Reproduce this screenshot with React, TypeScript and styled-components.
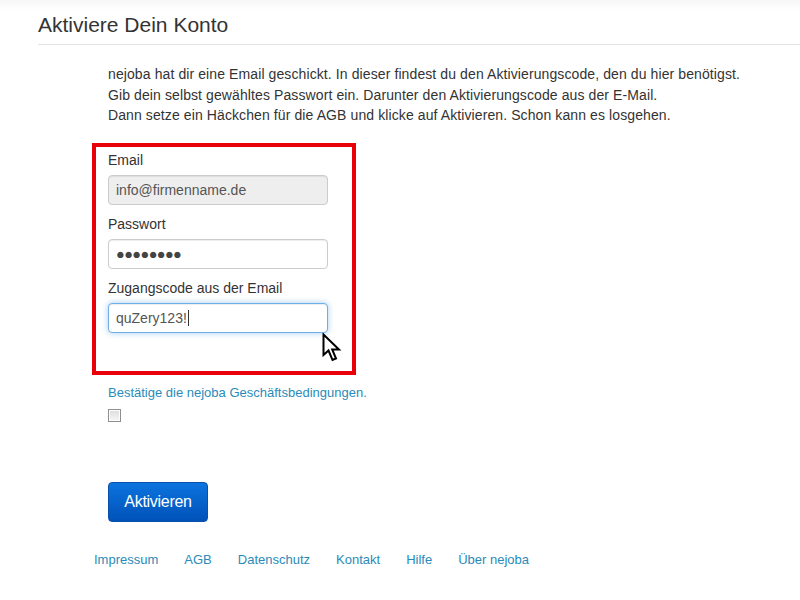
import React from "react";
import styled, { createGlobalStyle } from "styled-components";

const Global = createGlobalStyle`
  html, body { margin: 0; padding: 0; background: #fff; }
  body { font-family: "Liberation Sans", Arial, sans-serif; color: #333; }
  * { box-sizing: border-box; }
`;

const Page = styled.div`
  width: 800px;
  height: 600px;
  position: relative;
  overflow: hidden;
  background: linear-gradient(#f6f6f6 0px, #fff 10px);
`;

const Header = styled.div`
  margin-left: 38px;
  height: 45px;
  border-bottom: 1px solid #e3e3e3;
  display: flex;
  align-items: flex-end;
  padding-bottom: 7px;
`;

const Title = styled.h1`
  margin: 0;
  font-size: 21px;
  font-weight: normal;
  line-height: 24px;
  color: #333;
`;

const Content = styled.div`
  margin-left: 108px;
  padding-top: 19px;
`;

const Intro = styled.p`
  margin: 0;
  font-size: 14px;
  line-height: 20.5px;
  letter-spacing: 0.1px;
  color: #333;
`;

const Highlight = styled.div`
  position: relative;
  margin-left: -16px;
  margin-top: 17px;
  width: 264px;
  height: 232px;
  border: 4px solid #e8000b;
  padding: 3px 0 0 12px;
  display: flex;
  flex-direction: column;
`;

const Label = styled.label`
  font-size: 14px;
  line-height: 20px;
  color: #333;
  margin-bottom: 5px;
`;

const Input = styled.div<{ $disabled?: boolean; $focus?: boolean; $dots?: boolean }>`
  width: 220px;
  height: 30px;
  border-radius: 4px;
  border: 1px solid ${(p) => (p.$focus ? "#72aee6" : "#cccccc")};
  background: ${(p) => (p.$disabled ? "#eeeeee" : "#fff")};
  box-shadow: ${(p) =>
    p.$focus
      ? "inset 0 1px 1px rgba(0,0,0,0.075), 0 0 6px rgba(102,175,233,0.6)"
      : "inset 0 1px 1px rgba(0,0,0,0.075)"};
  color: ${(p) => (p.$dots ? "#444" : "#555")};
  font-size: ${(p) => (p.$dots ? "14.5px" : "14px")};
  letter-spacing: ${(p) => (p.$dots ? "-0.6px" : "0")};
  padding: 0 7px;
  display: flex;
  align-items: center;
  margin-bottom: 9px;
`;

const Caret = styled.span`
  display: inline-block;
  width: 1px;
  height: 16px;
  background: #333;
  margin-left: 1px;
`;

const Cursor = styled.svg`
  position: absolute;
  left: 226px;
  top: 186px;
`;

const AgbLink = styled.a`
  display: block;
  margin-top: 10px;
  font-size: 13px;
  line-height: 16px;
  color: #2a8bb9;
  text-decoration: none;
`;

const Check = styled.span`
  display: block;
  margin-top: 8px;
  width: 13px;
  height: 13px;
  border: 1px solid #8f8f8f;
  background: linear-gradient(#dcdcdc, #f6f6f6);
  box-shadow: inset 0 0 0 1px #fdfdfd;
`;

const Button = styled.button`
  margin-top: 60px;
  width: 100px;
  height: 40px;
  border: 1px solid #0a4fa8;
  border-radius: 4px;
  background: linear-gradient(#0c73de, #0052b8);
  color: #fff;
  font-family: "Liberation Sans", Arial, sans-serif;
  font-size: 16px;
  letter-spacing: -0.3px;
  padding: 0;
  cursor: pointer;
`;

const Footer = styled.nav`
  margin-left: 94px;
  margin-top: 30px;
  display: flex;
  gap: 26px;
`;

const FooterLink = styled.a`
  font-size: 13px;
  line-height: 16px;
  color: #2a8bb9;
  text-decoration: none;
`;

export default function App() {
  return (
    <Page>
      <Global />
      <Header>
        <Title>Aktiviere Dein Konto</Title>
      </Header>
      <Content>
        <Intro>
          nejoba hat dir eine Email geschickt. In dieser findest du den Aktivierungscode, den du hier benötigst.
          <br />
          Gib dein selbst gewähltes Passwort ein. Darunter den Aktivierungscode aus der E-Mail.
          <br />
          Dann setze ein Häckchen für die AGB und klicke auf Aktivieren. Schon kann es losgehen.
        </Intro>
        <Highlight>
          <Label>Email</Label>
          <Input $disabled>info@firmenname.de</Input>
          <Label>Passwort</Label>
          <Input $dots>●●●●●●●●</Input>
          <Label>Zugangscode aus der Email</Label>
          <Input $focus>
            quZery123!<Caret />
          </Input>
          <Cursor width="20" height="30" viewBox="0 0 20 30">
            <path
              d="M1.5 1.5 L1.5 22 L6.5 17.5 L10.5 27 L14 25.5 L10.2 16.5 L17 16.5 Z"
              fill="#fff"
              stroke="#000"
              strokeWidth="2"
              strokeLinejoin="miter"
            />
          </Cursor>
        </Highlight>
        <AgbLink href="#">Bestätige die nejoba Geschäftsbedingungen.</AgbLink>
        <Check />
        <Button>Aktivieren</Button>
      </Content>
      <Footer>
        <FooterLink href="#">Impressum</FooterLink>
        <FooterLink href="#">AGB</FooterLink>
        <FooterLink href="#">Datenschutz</FooterLink>
        <FooterLink href="#">Kontakt</FooterLink>
        <FooterLink href="#">Hilfe</FooterLink>
        <FooterLink href="#">Über nejoba</FooterLink>
      </Footer>
    </Page>
  );
}
